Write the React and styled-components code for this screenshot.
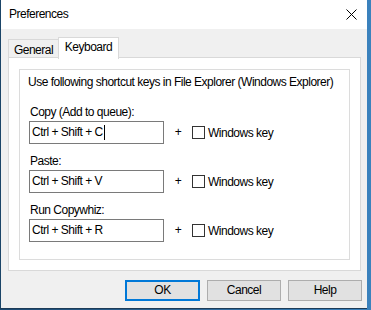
import React from 'react';
import styled, { createGlobalStyle } from 'styled-components';

const GlobalStyle = createGlobalStyle`
  html, body {
    margin: 0;
    padding: 0;
    background: #2f74ad;
  }
  body {
    font-family: "Liberation Sans", Arial, sans-serif;
    font-size: 12px;
    letter-spacing: -0.5px;
    color: #000;
  }
`;

const Desktop = styled.div`
  width: 371px;
  height: 310px;
  background: linear-gradient(90deg, #1d4a72 0%, #3b82bd 100%);
`;

const Window = styled.div`
  width: 367px;
  height: 309px;
  background: #f0f0f0;
  border-left: 1px solid #1b4568;
  border-bottom: 1px solid #1d3b57;
  display: flex;
  flex-direction: column;
  box-sizing: border-box;
`;

const TitleBar = styled.div`
  height: 29px;
  background: #fff;
  display: flex;
  align-items: center;
  justify-content: space-between;
  padding: 0 10px 0 8px;
  flex-shrink: 0;
`;

const Title = styled.span`
  font-size: 12px;
  line-height: 15px;
`;

const CloseIcon = () => (
  <svg width="11" height="11" viewBox="0 0 11 11">
    <path d="M0.5 0.5 L10.5 10.5 M10.5 0.5 L0.5 10.5" stroke="#000" strokeWidth="1" />
  </svg>
);

const Body = styled.div`
  flex: 1;
  padding: 7px 7px 0 7px;
  display: flex;
  flex-direction: column;
`;

const TabStrip = styled.div`
  display: flex;
  align-items: flex-end;
  height: 22px;
  position: relative;
  z-index: 1;
`;

const Tab = styled.div`
  box-sizing: border-box;
  height: ${p => (p.$active ? '22px' : '19px')};
  padding: ${p => (p.$active ? '2px 0 0 0' : '3px 0 0 0')};
  margin-bottom: ${p => (p.$active ? '-1px' : '0')};
  background: ${p => (p.$active ? '#fff' : '#f0f0f0')};
  border: 1px solid #d9d9d9;
  border-bottom: ${p => (p.$active ? 'none' : '1px solid #d9d9d9')};
  border-right: ${p => (p.$active ? '1px solid #d9d9d9' : 'none')};
  line-height: 15px;
  text-align: center;
  white-space: nowrap;
  width: ${p => p.$width}px;
`;

const Panel = styled.div`
  box-sizing: border-box;
  width: 353px;
  height: 214px;
  margin-top: -1px;
  background: #fff;
  border: 1px solid #d9d9d9;
  padding: 11px 0 0 10px;
`;

const GroupBox = styled.div`
  box-sizing: border-box;
  width: 331px;
  height: 191px;
  border: 1px solid #dcdcdc;
  padding: 5px 0 0 8px;
  display: flex;
  flex-direction: column;
`;

const Intro = styled.div`
  line-height: 15px;
  white-space: nowrap;
  margin-bottom: 15px;
`;

const Rows = styled.div`
  display: flex;
  flex-direction: column;
  gap: 10px;
  padding-left: 1px;
`;

const Row = styled.div`
  display: flex;
  flex-direction: column;
  gap: 1px;
`;

const Label = styled.div`
  line-height: 15px;
  padding-left: 1px;
`;

const Line = styled.div`
  display: flex;
  align-items: center;
`;

const KeyBox = styled.div`
  box-sizing: border-box;
  width: 135px;
  height: 23px;
  border: 1px solid #7a7a7a;
  background: #fff;
  padding: 0 0 0 2px;
  display: flex;
  align-items: center;
  line-height: 15px;
  white-space: nowrap;
`;

const Caret = styled.span`
  display: inline-block;
  width: 1px;
  height: 15px;
  background: #000;
  margin-left: 1px;
`;

const Plus = styled.span`
  width: 28px;
  text-align: center;
  line-height: 15px;
`;

const CheckBox = styled.span`
  box-sizing: border-box;
  width: 13px;
  height: 13px;
  border: 1px solid #333;
  background: #fff;
  margin-right: 3px;
`;

const Footer = styled.div`
  display: flex;
  justify-content: flex-end;
  gap: 7px;
  padding: 9px 0 0 0;
  width: 354px;
`;

const Button = styled.button`
  box-sizing: border-box;
  width: ${p => (p.$default ? '75px' : '74px')};
  height: 21px;
  font-family: inherit;
  font-size: 12px;
  letter-spacing: inherit;
  color: #000;
  background: #e1e1e1;
  border: ${p => (p.$default ? '2px solid #0078d7' : '1px solid #adadad')};
  padding: 0;
  line-height: 15px;
`;

const shortcuts = [
  { label: 'Copy (Add to queue):', keys: 'Ctrl + Shift + C', caret: true },
  { label: 'Paste:', keys: 'Ctrl + Shift + V' },
  { label: 'Run Copywhiz:', keys: 'Ctrl + Shift + R' },
];

export default function App() {
  return (
    <>
      <GlobalStyle />
      <Desktop>
        <Window>
          <TitleBar>
            <Title>Preferences</Title>
            <CloseIcon />
          </TitleBar>
          <Body>
            <TabStrip>
              <Tab $width={50}>General</Tab>
              <Tab $active $width={61}>Keyboard</Tab>
            </TabStrip>
            <Panel>
              <GroupBox>
                <Intro>Use following shortcut keys in File Explorer (Windows Explorer)</Intro>
                <Rows>
                  {shortcuts.map(s => (
                    <Row key={s.label}>
                      <Label>{s.label}</Label>
                      <Line>
                        <KeyBox>
                          {s.keys}
                          {s.caret && <Caret />}
                        </KeyBox>
                        <Plus>+</Plus>
                        <CheckBox />
                        <span>Windows key</span>
                      </Line>
                    </Row>
                  ))}
                </Rows>
              </GroupBox>
            </Panel>
            <Footer>
              <Button $default>OK</Button>
              <Button>Cancel</Button>
              <Button>Help</Button>
            </Footer>
          </Body>
        </Window>
      </Desktop>
    </>
  );
}
